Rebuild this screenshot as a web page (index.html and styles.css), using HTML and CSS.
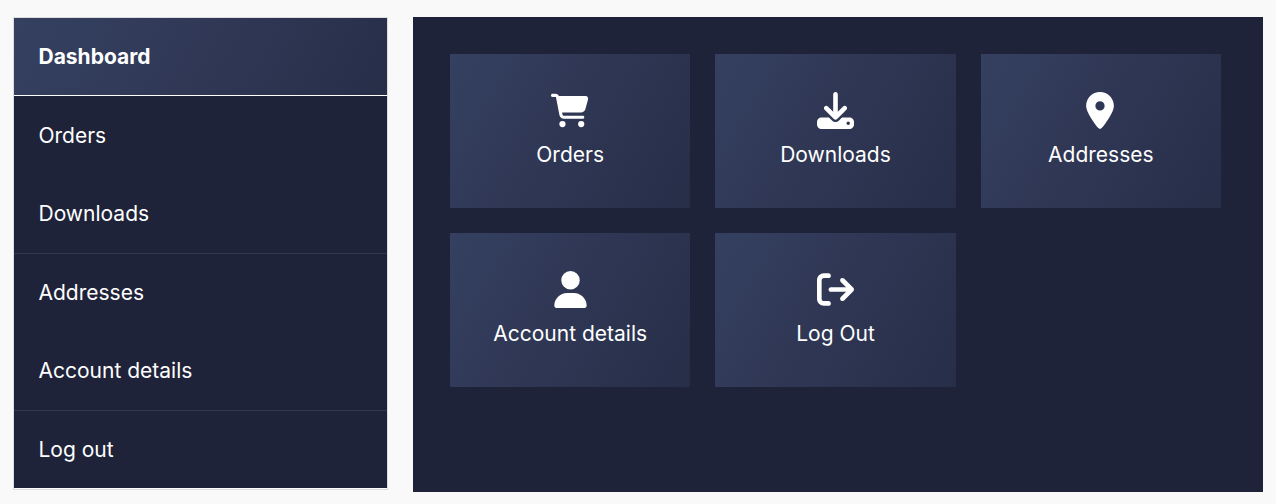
FILE: index.html
```html
<!DOCTYPE html>
<html lang="en">
<head>
<meta charset="utf-8">
<title>My account</title>
<link rel="stylesheet" href="styles.css">
</head>
<body>
<div class="account">
  <nav class="menu">
    <a class="menu-item active">Dashboard</a>
    <a class="menu-item first">Orders</a>
    <a class="menu-item lined">Downloads</a>
    <a class="menu-item">Addresses</a>
    <a class="menu-item lined">Account details</a>
    <a class="menu-item last">Log out</a>
  </nav>
  <main class="panel">
    <a class="card">
      <svg class="icon wide" viewBox="0 0 576 512"><path d="M0 24C0 10.7 10.7 0 24 0H69.5c22 0 41.5 12.8 50.6 32h411c26.3 0 45.5 25 38.6 50.4l-41 152.3c-8.5 31.4-37 53.3-69.5 53.3H170.7l5.4 28.5c2.2 11.3 12.1 19.5 23.6 19.5H488c13.3 0 24 10.7 24 24s-10.7 24-24 24H199.7c-34.6 0-64.3-24.6-70.7-58.5L77.4 54.5c-.7-3.8-4-6.5-7.9-6.5H24C10.7 48 0 37.3 0 24zM128 464a48 48 0 1 1 96 0 48 48 0 1 1 -96 0zm336-48a48 48 0 1 1 0 96 48 48 0 1 1 0-96z"/></svg>
      <span>Orders</span>
    </a>
    <a class="card">
      <svg class="icon" viewBox="0 0 512 512"><path d="M288 32c0-17.7-14.3-32-32-32s-32 14.3-32 32V274.7l-73.4-73.4c-12.5-12.5-32.8-12.5-45.3 0s-12.5 32.8 0 45.3l128 128c12.5 12.5 32.8 12.5 45.3 0l128-128c12.5-12.5 12.5-32.8 0-45.3s-32.8-12.5-45.3 0L288 274.7V32zM64 352c-35.3 0-64 28.7-64 64v32c0 35.3 28.7 64 64 64H448c35.3 0 64-28.7 64-64V416c0-35.3-28.7-64-64-64H346.5l-45.3 45.3c-25 25-65.5 25-90.5 0L165.5 352H64zm368 56a24 24 0 1 1 0 48 24 24 0 1 1 0-48z"/></svg>
      <span>Downloads</span>
    </a>
    <a class="card">
      <svg class="icon pin" viewBox="0 0 384 512"><path d="M215.7 499.2C267 435 384 279.4 384 192C384 86 298 0 192 0S0 86 0 192c0 87.4 117 243 168.3 307.2c12.3 15.3 35.1 15.3 47.4 0zM192 128a64 64 0 1 1 0 128 64 64 0 1 1 0-128z"/></svg>
      <span>Addresses</span>
    </a>
    <a class="card">
      <svg class="icon user" viewBox="0 0 448 512"><path d="M224 256A128 128 0 1 0 224 0a128 128 0 1 0 0 256zm-45.7 48C79.8 304 0 383.8 0 482.3C0 498.7 13.3 512 29.7 512H418.3c16.4 0 29.7-13.3 29.7-29.7C448 383.8 368.2 304 269.7 304H178.3z"/></svg>
      <span>Account details</span>
    </a>
    <a class="card">
      <svg class="icon" viewBox="0 0 512 512"><path d="M502.6 278.6c12.5-12.5 12.5-32.8 0-45.3l-128-128c-12.5-12.5-32.8-12.5-45.3 0s-12.5 32.8 0 45.3L402.7 224 192 224c-17.7 0-32 14.3-32 32s14.3 32 32 32l210.7 0-73.4 73.4c-12.5 12.5-12.5 32.8 0 45.3s32.8 12.5 45.3 0l128-128zM160 96c17.7 0 32-14.3 32-32s-14.3-32-32-32L96 32C43 32 0 75 0 128L0 384c0 53 43 96 96 96l64 0c17.7 0 32-14.3 32-32s-14.3-32-32-32l-64 0c-17.7 0-32-14.3-32-32l0-256c0-17.7 14.3-32 32-32l64 0z"/></svg>
      <span>Log Out</span>
    </a>
  </main>
</div>
</body>
</html>
```
FILE: styles.css
```css
* {
  box-sizing: border-box;
}

body {
  margin: 0;
  background: #f9f9f9;
  color: #fff;
  font: 21px/32px Inter, "Liberation Sans", sans-serif;
}

.account {
  display: flex;
  align-items: flex-start;
  gap: 25px;
  height: 504px;
  padding: 17px 13px 12px;
}

.menu {
  display: grid;
  grid-template-rows: 78px 79px 79px 78px 79px 78px;
  width: 375px;
  height: 473px;
  border: 1px solid #ddd;
}

.menu-item {
  display: flex;
  align-items: center;
  padding: 0 0 1px 24.5px;
  background: #1f2339;
}

.active {
  padding-bottom: 0;
  background: linear-gradient(120deg, #354060, #303856 50%, #262e48);
  border-bottom: 1px solid #fff;
  font-weight: 700;
}

.first {
  padding-bottom: 0;
}

.lined {
  border-bottom: 1px solid #2b3a4f;
}

.last {
  padding-bottom: 0;
  border-bottom: 1px solid #fff;
}

.panel {
  display: grid;
  flex: 1;
  grid-template-columns: repeat(3, 1fr);
  grid-auto-rows: 154px;
  gap: 25px;
  height: 475px;
  padding: 37px 42px 0 37px;
  background: #1f2339;
}

.card {
  display: flex;
  flex-direction: column;
  align-items: center;
  padding-top: 38px;
  gap: 10px;
  background: linear-gradient(120deg, #354060, #303856 40%, #262e48);
}

.icon {
  height: 37px;
  fill: #fff;
}

.wide {
  width: 37.5px;
}

.pin {
  width: 28px;
  margin-right: 1.4px;
}

.user {
  width: 33px;
}
```
